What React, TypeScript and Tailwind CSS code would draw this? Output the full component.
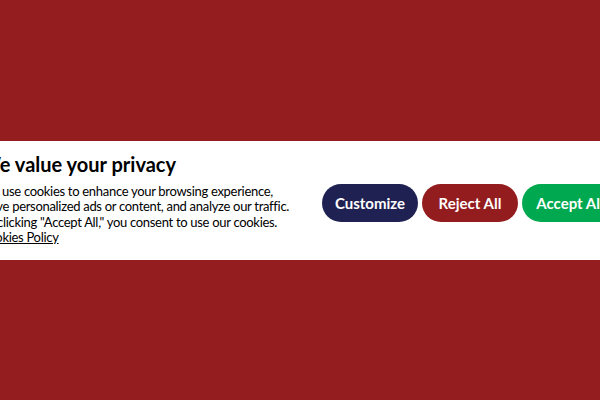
import React from 'react';

const buttons = [
    { label: 'Customize', className: 'bg-[#1f2153]' },
    { label: 'Reject All', className: 'bg-[#931c1e]' },
    { label: 'Accept All', className: 'bg-[#00a84f]' },
];

export default function App() {
    return (
        <div className="h-[400px] w-[600px] overflow-hidden bg-[#941d1f] font-['Lato',sans-serif]">
            {/* Consent banner */}
            <div className="mt-[141px] h-[119px] bg-white flex justify-center items-center">
                <div className="flex items-center gap-[28px] shrink-0">
                    <div className="w-[314px] shrink-0 text-black mb-[4px]">
                        <h2 className="text-[20px] leading-[24px] font-bold">We value your privacy</h2>
                        <p className="mt-[8px] text-[13px] leading-[15.5px] tracking-[-0.3px]">
                            We use cookies to enhance your browsing experience, serve personalized ads or content, and
                            analyze our traffic. By clicking "Accept All," you consent to use our cookies.
                        </p>
                        <a href="#" className="block text-[13px] leading-[15.5px] tracking-[-0.3px] underline">
                            Cookies Policy
                        </a>
                    </div>
                    <div className="flex gap-[4px] mt-[5px] pr-[2px] shrink-0">
                        {buttons.map((b) => (
                            <button
                                key={b.label}
                                type="button"
                                className={`h-[38px] w-[96px] rounded-full text-white text-[15px] font-bold ${b.className}`}
                            >
                                {b.label}
                            </button>
                        ))}
                    </div>
                </div>
            </div>
        </div>
    );
}
